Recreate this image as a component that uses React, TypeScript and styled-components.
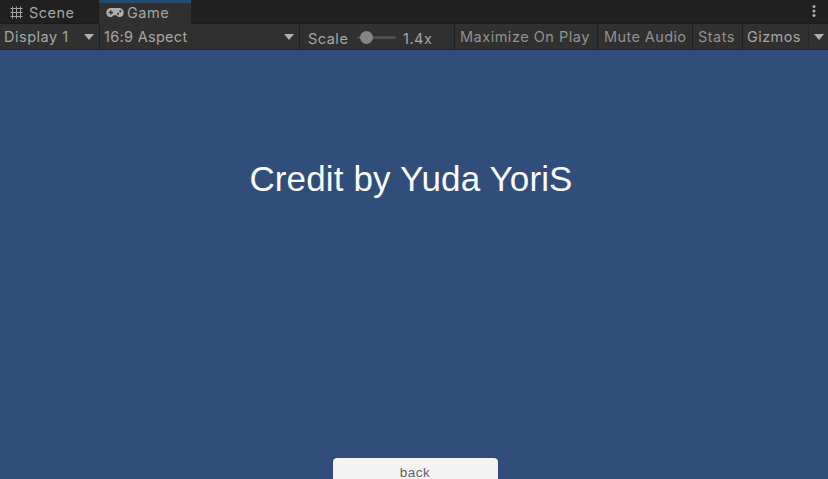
import React from "react";
import styled, { createGlobalStyle } from "styled-components";

const GlobalStyle = createGlobalStyle`
  * { box-sizing: border-box; }
  html, body { margin: 0; padding: 0; overflow: hidden; }
  body { background: #314d79; }
`;

const Window = styled.div`
  display: flex;
  flex-direction: column;
  width: 828px;
  height: 479px;
  overflow: hidden;
  background: #314d79;
  font-family: Inter, "Liberation Sans", sans-serif;
  font-size: 14.5px;
  letter-spacing: 0.5px;
  color: #a6a6a6;
  white-space: nowrap;
`;

const TabBar = styled.div`
  display: flex;
  flex: 0 0 24px;
  background: linear-gradient(#202020 23px, #1b1b1b 23px);
`;

const Tab = styled.div<{ $active?: boolean; $width: number; $pad: number; $gap: number }>`
  display: flex;
  align-items: center;
  gap: ${(p) => p.$gap}px;
  width: ${(p) => p.$width}px;
  height: 24px;
  padding: 1px 0 0 ${(p) => p.$pad}px;
  background: ${(p) => (p.$active ? "#303030" : "transparent")};
  box-shadow: ${(p) => (p.$active ? "inset 0 3px #234b6e" : "none")};
`;

const TabMenu = styled.div`
  display: flex;
  margin-left: auto;
  padding: 4px 12px 0 0;
`;

const Toolbar = styled.div`
  display: flex;
  flex: 0 0 26px;
  background: #303030;
  border-bottom: 1px solid #1c2638;
`;

const Cell = styled.div<{ $width: number; $pad: number; $spacing?: number; $dim?: boolean; $last?: boolean; $faint?: boolean }>`
  display: flex;
  align-items: center;
  width: ${(p) => p.$width}px;
  padding-left: ${(p) => p.$pad}px;
  border-right: ${(p) => (p.$last ? "none" : `1px solid ${p.$faint ? "#272727" : "#202020"}`)};
  letter-spacing: ${(p) => p.$spacing ?? 0.5}px;
  color: ${(p) => (p.$dim ? "#919191" : "#a6a6a6")};
`;

const Caret = styled.span<{ $right: number }>`
  margin: 0 ${(p) => p.$right}px 0 auto;
  border: 5px solid transparent;
  border-top: 6px solid #b0b0b0;
  border-bottom: 0;
`;

const ScaleLabel = styled.span`
  width: 49px;
  padding-top: 4px;
`;

const ScaleValue = styled.span`
  padding: 4px 0 0 7px;
`;

const Track = styled.span`
  display: flex;
  align-items: center;
  width: 39px;
  height: 3px;
  margin-top: 1px;
  padding-left: 3px;
  border-radius: 2px;
  background: #4e4e4e;
`;

const Knob = styled.span`
  width: 13px;
  height: 13px;
  border-radius: 50%;
  background: #858585;
`;

const GameView = styled.main`
  display: flex;
  flex: 1;
  flex-direction: column;
  align-items: center;
  justify-content: space-between;
  font-family: "Liberation Sans", Arial, sans-serif;
`;

const Credit = styled.h1`
  margin: 109px 6px 0 0;
  font-size: 35px;
  font-weight: 400;
  line-height: 40px;
  letter-spacing: 0.14px;
  color: #fafcff;
`;

const BackButton = styled.button`
  width: 165px;
  height: 21px;
  padding: 7px 0 0;
  border: 0;
  border-radius: 4px 4px 0 0;
  margin-left: 2px;
  background: #f4f4f4;
  box-shadow: 0 0 1px #172746;
  font-family: "Liberation Sans", Arial, sans-serif;
  font-size: 13.5px;
  line-height: 16px;
  letter-spacing: 0.5px;
  color: #626262;
`;

const GridIcon = () => (
  <svg width="13" height="13" viewBox="0 0 13 13" stroke="#a0a0a0" strokeWidth="1">
    <path d="M2.500 0.500v12M6.500 0.500v12M10.500 0.500v12M0.500 2.500h12M0.500 6.500h12M0.500 10.500h12" />
  </svg>
);

const GamepadIcon = () => (
  <svg width="18" height="11" viewBox="0 0 18 11">
    <path d="M5 1h8a4.5 4.5 0 0 1 4.7 4.5c0 2.5-1.7 4.5-4 4.5-1.5 0-2.5-.6-3.3-1.8H7.6C6.8 9.400 5.800 10 4.300 10 2 10 .3 8 .3 5.500A4.500 4.500 0 0 1 5 1z" fill="#b0b0b0" />
    <path d="M4.800 3.200v4.600M2.500 5.500h4.600" stroke="#303030" strokeWidth="1.300" />
    <circle cx="12" cy="6.800" r="1.100" fill="#303030" />
    <circle cx="14.300" cy="4.300" r="1.100" fill="#303030" />
  </svg>
);

const MoreIcon = () => (
  <svg width="4" height="14" viewBox="0 0 4 14" fill="#b0b0b0">
    <circle cx="2" cy="2.500" r="1.500" />
    <circle cx="2" cy="7" r="1.500" />
    <circle cx="2" cy="11.500" r="1.500" />
  </svg>
);

export default function App() {
  return (
    <Window>
      <GlobalStyle />
      <TabBar>
        <Tab $width={99} $pad={10} $gap={6}><GridIcon />Scene</Tab>
        <Tab $active $width={92} $pad={7} $gap={3}><GamepadIcon />Game</Tab>
        <TabMenu><MoreIcon /></TabMenu>
      </TabBar>
      <Toolbar>
        <Cell $width={100} $pad={4}>Display 1<Caret $right={5} /></Cell>
        <Cell $width={200} $pad={4} $spacing={0.3}>16:9 Aspect<Caret $right={5} /></Cell>
        <Cell $width={155} $pad={8}>
          <ScaleLabel>Scale</ScaleLabel>
          <Track><Knob /></Track>
          <ScaleValue>1.4x</ScaleValue>
        </Cell>
        <Cell $width={143} $pad={5} $dim>Maximize On Play</Cell>
        <Cell $width={95} $pad={6} $spacing={0.4} $dim>Mute Audio</Cell>
        <Cell $width={50} $pad={5} $dim>Stats</Cell>
        <Cell $width={66} $pad={4} $spacing={0.4} $faint>Gizmos</Cell>
        <Cell $width={19} $pad={0} $last><Caret $right={4} /></Cell>
      </Toolbar>
      <GameView>
        <Credit>Credit by Yuda YoriS</Credit>
        <BackButton>back</BackButton>
      </GameView>
    </Window>
  );
}
